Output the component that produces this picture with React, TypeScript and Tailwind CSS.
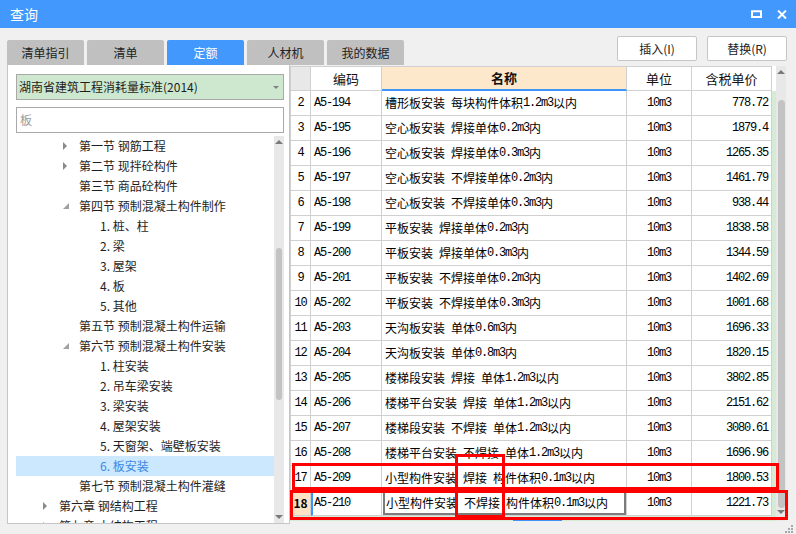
import React from 'react';

const rows: string[][] = [
  ['2', 'A5-194', '槽形板安装 每块构件体积1.2m3以内', '10m3', '778.72'],
  ['3', 'A5-195', '空心板安装 焊接单体0.2m3内', '10m3', '1879.4'],
  ['4', 'A5-196', '空心板安装 焊接单体0.3m3内', '10m3', '1265.35'],
  ['5', 'A5-197', '空心板安装 不焊接单体0.2m3内', '10m3', '1461.79'],
  ['6', 'A5-198', '空心板安装 不焊接单体0.3m3内', '10m3', '938.44'],
  ['7', 'A5-199', '平板安装 焊接单体0.2m3内', '10m3', '1838.58'],
  ['8', 'A5-200', '平板安装 焊接单体0.3m3内', '10m3', '1344.59'],
  ['9', 'A5-201', '平板安装 不焊接单体0.2m3内', '10m3', '1402.69'],
  ['10', 'A5-202', '平板安装 不焊接单体0.3m3内', '10m3', '1001.68'],
  ['11', 'A5-203', '天沟板安装 单体0.6m3内', '10m3', '1696.33'],
  ['12', 'A5-204', '天沟板安装 单体0.8m3内', '10m3', '1820.15'],
  ['13', 'A5-205', '楼梯段安装 焊接 单体1.2m3以内', '10m3', '3802.85'],
  ['14', 'A5-206', '楼梯平台安装 焊接 单体1.2m3以内', '10m3', '2151.62'],
  ['15', 'A5-207', '楼梯段安装 不焊接 单体1.2m3以内', '10m3', '3080.61'],
  ['16', 'A5-208', '楼梯平台安装 不焊接 单体1.2m3以内', '10m3', '1696.96'],
  ['17', 'A5-209', '小型构件安装 焊接 构件体积0.1m3以内', '10m3', '1800.53'],
  ['18', 'A5-210', '小型构件安装 不焊接 构件体积0.1m3以内', '10m3', '1221.73'],
];

type Node = { pl: string; arrow?: 'c' | 'e'; t: string; sel?: boolean };
const tree: Node[] = [
  { pl: 'pl-[47px]', arrow: 'c', t: '第一节 钢筋工程' },
  { pl: 'pl-[47px]', arrow: 'c', t: '第二节 现拌砼构件' },
  { pl: 'pl-[47px]', t: '第三节 商品砼构件' },
  { pl: 'pl-[47px]', arrow: 'e', t: '第四节 预制混凝土构件制作' },
  { pl: 'pl-[68px]', t: '1. 桩、柱' },
  { pl: 'pl-[68px]', t: '2. 梁' },
  { pl: 'pl-[68px]', t: '3. 屋架' },
  { pl: 'pl-[68px]', t: '4. 板' },
  { pl: 'pl-[68px]', t: '5. 其他' },
  { pl: 'pl-[47px]', t: '第五节 预制混凝土构件运输' },
  { pl: 'pl-[47px]', arrow: 'e', t: '第六节 预制混凝土构件安装' },
  { pl: 'pl-[68px]', t: '1. 柱安装' },
  { pl: 'pl-[68px]', t: '2. 吊车梁安装' },
  { pl: 'pl-[68px]', t: '3. 梁安装' },
  { pl: 'pl-[68px]', t: '4. 屋架安装' },
  { pl: 'pl-[68px]', t: '5. 天窗架、端壁板安装' },
  { pl: 'pl-[68px]', t: '6. 板安装', sel: true },
  { pl: 'pl-[47px]', t: '第七节 预制混凝土构件灌缝' },
  { pl: 'pl-[27px]', arrow: 'c', t: '第六章 钢结构工程' },
  { pl: 'pl-[27px]', arrow: 'c', t: '第七章 木结构工程' },
];

function Mixed({ t }: { t: string }) {
  const parts = t.split(/([\x20-\x7e]+)/).filter((p) => p.length > 0);
  return (
    <>
      {parts.map((p, i) =>
        /^[\x20-\x7e]+$/.test(p) ? (
          <span key={i} className="font-['Liberation_Mono',monospace] tracking-[-1.2px] whitespace-pre">
            {p}
          </span>
        ) : (
          <span key={i}>{p}</span>
        )
      )}
    </>
  );
}

function UpTri() {
  return (
    <svg width="8" height="4" viewBox="0 0 8 4">
      <polygon points="0,4 4,0 8,4" fill="#7a7a7a" />
    </svg>
  );
}
function DownTri() {
  return (
    <svg width="8" height="4" viewBox="0 0 8 4">
      <polygon points="0,0 8,0 4,4" fill="#7a7a7a" />
    </svg>
  );
}

const tabs = ['清单指引', '清单', '定额', '人材机', '我的数据'];

export default function App() {
  return (
    <div className="relative w-[796px] h-[534px] bg-[#f0f0f0] flex flex-col overflow-hidden font-['Noto_Sans_CJK_SC','Noto_Sans',sans-serif] text-[#1e1e1e]">
      {/* Title bar */}
      <div className="h-[28px] shrink-0 bg-[#4298fd] flex items-center pl-[10px] pr-[9px]">
        <span className="text-white text-[14px] leading-none">查询</span>
        <div className="ml-auto flex items-center gap-[15px]">
          <svg width="11" height="8" viewBox="0 0 11 8">
            <rect x="1" y="1.25" width="9" height="5.75" fill="none" stroke="#ffffff" strokeWidth="2" />
          </svg>
          <svg width="10" height="9" viewBox="0 0 10 9">
            <path d="M1 0.5 L9 8.5 M9 0.5 L1 8.5" stroke="#ffffff" strokeWidth="2" />
          </svg>
        </div>
      </div>

      {/* Toolbar: tabs + buttons */}
      <div className="h-[37px] shrink-0 flex pl-[7px] pr-[9px]">
        <div className="flex gap-[3px] self-end">
          {tabs.map((t) => (
            <div
              key={t}
              className={
                t === '定额'
                  ? 'w-[77px] h-[25px] rounded-t-[2px] bg-[#4298fd] text-white text-[12px] flex items-center justify-center'
                  : 'w-[77px] h-[25px] rounded-t-[2px] bg-[#c0c0c0] text-[#222] text-[12px] flex items-center justify-center'
              }
            >
              {t}
            </div>
          ))}
        </div>
        <div className="ml-auto mt-[8px] flex gap-[10px]">
          <div className="w-[80px] h-[25px] bg-white border border-[#c6c6c6] rounded-[2px] text-[12px] text-[#222] flex items-center justify-center">
            插入(I)
          </div>
          <div className="w-[80px] h-[25px] bg-white border border-[#c6c6c6] rounded-[2px] text-[12px] text-[#222] flex items-center justify-center">
            替换(R)
          </div>
        </div>
      </div>

      {/* Main */}
      <div className="h-[459px] shrink-0 flex pl-[7px]">
        {/* Left panel */}
        <div className="w-[283px] h-full bg-white border-x border-b border-[#c6c6c6] pt-[9px] pl-[8px] pr-[5px] flex flex-col">
          <div className="h-[26px] shrink-0 bg-[#cde8cf] border border-[#a9a9a9] flex items-center pl-[2px] pr-[4px] text-[12px] text-[#1e1e1e]">
            <span>湖南省建筑工程消耗量标准(2014)</span>
            <svg className="ml-auto" width="6" height="3" viewBox="0 0 6 3">
              <polygon points="0,0 6,0 3,3" fill="#808080" />
            </svg>
          </div>
          <div className="mt-[7px] h-[26px] shrink-0 border border-[#a9a9a9] flex items-center pl-[3px] text-[12px] text-[#9a9a9a]">
            板
          </div>
          <div className="mt-[3px] flex-1 min-h-0 flex">
            <div className="flex-1 overflow-hidden">
              {tree.map((n, i) => (
                <div
                  key={i}
                  className={
                    'h-[20px] flex items-center text-[12px] leading-[20px] whitespace-nowrap ' +
                    n.pl +
                    (n.sel ? ' bg-[#cce8ff] text-[#3a88e4]' : ' text-[#1e1e1e]')
                  }
                >
                  <div className="w-[16px] h-[20px] flex items-center shrink-0">
                    {n.arrow === 'c' && (
                      <svg width="5" height="8" viewBox="0 0 5 8">
                        <polygon points="0,0 4,4 0,8" fill="#8a8a8a" />
                      </svg>
                    )}
                    {n.arrow === 'e' && (
                      <svg width="6" height="6" viewBox="0 0 6 6">
                        <polygon points="6,0 6,6 0,6" fill="#a0a0a0" />
                      </svg>
                    )}
                  </div>
                  <span>{n.t}</span>
                </div>
              ))}
            </div>
            <div className="w-[10px] bg-[#e8e8e8] flex flex-col items-center">
              <div className="mt-[4px]">
                <UpTri />
              </div>
              <div className="mt-[104px] w-[6px] h-[152px] rounded-full bg-[#c3c3c3]" />
              <div className="flex-1" />
              <div className="mb-[4px]">
                <DownTri />
              </div>
            </div>
          </div>
        </div>

        {/* Right table */}
        <div className="w-[496px] h-[455px] mt-[1px] flex">
          <div className="w-[482px] flex flex-col bg-[#d5ebd5]">
            {/* Header */}
            <div className="h-[25px] shrink-0 flex bg-white text-[13px] text-[#111]">
              <div className="w-[21px] border border-[#d0d0d0] bg-[#e8e8e8]" />
              <div className="w-[71px] border-t border-r border-b border-[#d0d0d0] flex items-center justify-center">编码</div>
              <div className="w-[245px] border-t border-r border-[#d0d0d0] border-b-2 border-b-[#3f95f7] bg-[#fee8cc] font-bold flex items-center justify-center">
                名称
              </div>
              <div className="w-[65px] border-t border-r border-b border-[#d0d0d0] flex items-center justify-center">单位</div>
              <div className="w-[80px] border-t border-r border-b border-[#d0d0d0] flex items-center justify-center">含税单价</div>
            </div>
            {/* Rows */}
            {rows.map((r) => {
              const last = r[0] === '18';
              return (
                <div key={r[0]} className="h-[25px] shrink-0 flex bg-white text-[12px] text-black leading-none">
                  <div
                    className={
                      last
                        ? 'w-[21px] border-l border-r border-b border-[#d0d0d0] bg-[#fde3c4] font-bold flex items-center justify-center'
                        : 'w-[21px] border-l border-r border-b border-[#d0d0d0] flex items-center justify-center'
                    }
                  >
                    {last ? r[0] : <Mixed t={r[0]} />}
                  </div>
                  <div
                    className={
                      last
                        ? 'w-[71px] border-r border-b border-[#d0d0d0] border-l-2 border-l-[#3f95f7] pl-[1px] flex items-center'
                        : 'w-[71px] border-r border-b border-[#d0d0d0] pl-[3px] flex items-center'
                    }
                  >
                    <Mixed t={r[1]} />
                  </div>
                  <div className="w-[245px] border-r border-b border-[#d0d0d0] flex">
                    <div
                      className={
                        last
                          ? 'flex-1 ml-[1px] border-2 border-[#7c7c7c] pl-[1px] flex items-center whitespace-nowrap overflow-hidden'
                          : 'flex-1 pl-[3px] flex items-center whitespace-nowrap overflow-hidden'
                      }
                    >
                      <Mixed t={r[2]} />
                    </div>
                  </div>
                  <div className="w-[65px] border-r border-b border-[#d0d0d0] flex items-center justify-center">
                    <Mixed t={r[3]} />
                  </div>
                  <div className="w-[80px] border-r border-b border-[#d0d0d0] pr-[3px] flex items-center justify-end">
                    <Mixed t={r[4]} />
                  </div>
                </div>
              );
            })}
            <div className="flex-1 flex flex-col justify-end">
              <div className="h-[2px] ml-[223px] w-[49px] bg-[#3f95f7]" />
            </div>
          </div>
          <div className="w-[4px] flex flex-col">
            <div className="h-[25px] bg-white" />
            <div className="flex-1 bg-[#d5ebd5]" />
          </div>
          <div className="w-[10px] bg-[#e8e8e8] flex flex-col items-center">
            <div className="mt-[4px]">
              <UpTri />
            </div>
            <div className="mt-[26px] w-[7px] h-[408px] rounded-full bg-[#c3c3c3]" />
            <div className="flex-1" />
            <div className="mb-[7px]">
              <DownTri />
            </div>
          </div>
        </div>
      </div>

      {/* Bottom strip with resize grip */}
      <div className="flex-1 flex justify-end items-start pr-[3px] pt-[1px]">
        <svg width="8" height="8" viewBox="0 0 8 8">
          <rect x="6" y="0" width="2" height="2" fill="#a8a8a8" />
          <rect x="3" y="3" width="2" height="2" fill="#a8a8a8" />
          <rect x="6" y="3" width="2" height="2" fill="#a8a8a8" />
          <rect x="0" y="6" width="2" height="2" fill="#a8a8a8" />
          <rect x="3" y="6" width="2" height="2" fill="#a8a8a8" />
          <rect x="6" y="6" width="2" height="2" fill="#a8a8a8" />
        </svg>
      </div>

      {/* Red annotation boxes */}
      <div className="absolute left-[292px] top-[463px] w-[487px] h-[27px] border-[3px] border-[#ff0000]" />
      <div className="absolute left-[290px] top-[490px] w-[498px] h-[30px] border-[3px] border-[#ff0000]" />
      <div className="absolute left-[455px] top-[454px] w-[50px] h-[64px] border-[3px] border-[#ff0000]" />
    </div>
  );
}
